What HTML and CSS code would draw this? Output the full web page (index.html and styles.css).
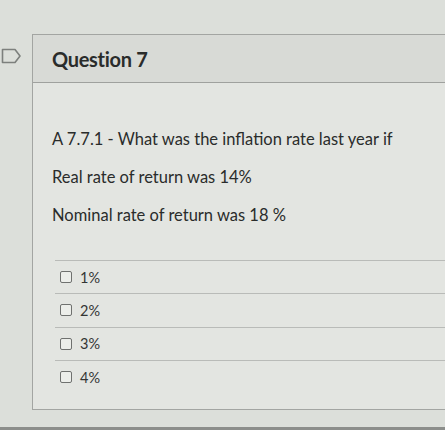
FILE: index.html
```html
<!DOCTYPE html>
<html>
<head>
<meta charset="utf-8">
<link rel="stylesheet" href="styles.css">
</head>
<body>
<div class="page">
  <div class="gutter">
    <svg class="flag" width="22" height="18" viewBox="0 0 22 18">
      <path d="M2.5 2.5 H15 L20 9 L15 15.5 H2.5 Z" fill="none" stroke="#7d807d" stroke-width="1.6" stroke-linejoin="round"/>
    </svg>
  </div>
  <div class="card">
    <div class="card-header"><h2 class="title">Question 7</h2></div>
    <div class="card-body">
      <p class="q">A 7.7.1 - What was the inflation rate last year if</p>
      <p class="q">Real rate of return was 14%</p>
      <p class="q">Nominal rate of return was 18 %</p>
      <ul class="answers">
        <li class="answer"><span class="box"></span><span>1%</span></li>
        <li class="answer"><span class="box"></span><span>2%</span></li>
        <li class="answer"><span class="box"></span><span>3%</span></li>
        <li class="answer"><span class="box"></span><span>4%</span></li>
      </ul>
    </div>
  </div>
</div>
<div class="bottom"></div>
</body>
</html>
```
FILE: styles.css
```css
html, body {
  margin: 0;
  padding: 0;
  width: 445px;
  height: 430px;
  overflow: hidden;
  background: #dcdfda;
  font-family: Lato, "Open Sans", sans-serif;
  color: #2b2d2c;
}
.page {
  display: flex;
  padding-top: 34px;
  height: 393px;
}
.gutter {
  width: 32px;
  flex: none;
}
.flag {
  display: block;
  margin-top: 13px;
}
.card {
  flex: 1;
  border: 1.5px solid #a3a5a2;
  border-right: none;
  background: #e3e5e1;
  height: 374px;
}
.card-header {
  height: 47px;
  background: #d8dad6;
  border-bottom: 1.5px solid #9fa19e;
  display: flex;
  align-items: center;
  padding-left: 19px;
}
.title {
  margin: 0;
  font-size: 20px;
  font-weight: 700;
  color: #2a2c2b;
  letter-spacing: -0.3px;
}
.card-body {
  padding: 46px 0 0 19px;
}
.q {
  margin: 0 0 18px 0;
  font-size: 16.5px;
  line-height: 20px;
  color: #2a2c2b;
}
.answers {
  list-style: none;
  margin: 35px 0 0 3px;
  padding: 0;
}
.answer {
  border-top: 1px solid #b9bbb8;
  height: 32.3px;
  display: flex;
  align-items: center;
  gap: 8px;
  padding-left: 5px;
  font-size: 14.5px;
  color: #333534;
}
.box {
  width: 10px;
  height: 10px;
  border: 1.5px solid #6f716f;
  border-radius: 2px;
  background: #eceeea;
}
.bottom {
  height: 3px;
  background: #8c8e8b;
}
```
